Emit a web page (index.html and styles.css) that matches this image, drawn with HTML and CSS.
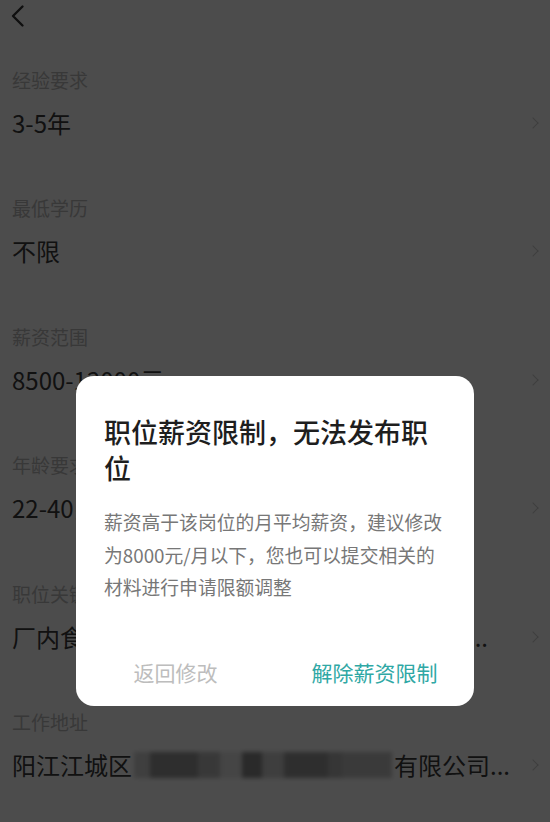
FILE: index.html
```html
<!DOCTYPE html>
<html lang="zh-CN">
<head>
<meta charset="utf-8">
<title>职位信息</title>
<link rel="stylesheet" href="styles.css">
</head>
<body>
<div class="page">
  <header class="topbar">
    <svg class="back" width="16" height="24" viewBox="0 0 16 24"><path d="M12.5 2.5 L3 12 L12.5 21.5" fill="none" stroke="#333" stroke-width="2.4" stroke-linecap="round" stroke-linejoin="round"/></svg>
  </header>
  <div class="row">
    <div class="label">经验要求</div>
    <div class="value-line"><span class="value">3-5年</span><span class="chev"></span></div>
  </div>
  <div class="row">
    <div class="label">最低学历</div>
    <div class="value-line"><span class="value">不限</span><span class="chev"></span></div>
  </div>
  <div class="row">
    <div class="label">薪资范围</div>
    <div class="value-line"><span class="value">8500-12000元</span><span class="chev"></span></div>
  </div>
  <div class="row">
    <div class="label">年龄要求</div>
    <div class="value-line"><span class="value">22-40岁</span><span class="chev"></span></div>
  </div>
  <div class="row">
    <div class="label">职位关键词</div>
    <div class="value-line"><span class="value">厂内食宿，包吃包住，五险一金，节假日福...</span><span class="chev"></span></div>
  </div>
  <div class="row">
    <div class="label">工作地址</div>
    <div class="value-line"><span class="value">阳江江城区<span class="mosaic"><i class="m1"></i><i class="m2"></i><i class="m3"></i><i class="m4"></i><i class="m5"></i><i class="m6"></i><i class="m7"></i><i class="m8"></i><i class="m9"></i></span>有限公司...</span><span class="chev"></span></div>
  </div>
</div>
<div class="mask">
  <div class="dialog">
    <h2 class="dlg-title">职位薪资限制，无法发布职<br>位</h2>
    <p class="dlg-text">薪资高于该岗位的月平均薪资，建议修改<br>为8000元/月以下，您也可以提交相关的<br>材料进行申请限额调整</p>
    <div class="dlg-actions">
      <div class="btn btn-cancel">返回修改</div>
      <div class="btn btn-ok">解除薪资限制</div>
    </div>
  </div>
</div>
</body>
</html>
```

FILE: styles.css
```css
* { box-sizing: border-box; }
html, body {
  margin: 0;
  padding: 0;
  width: 550px;
  height: 822px;
  overflow: hidden;
  background: #ffffff;
  font-family: "Noto Sans CJK SC", "Noto Sans", sans-serif;
}
.page {
  width: 550px;
}
.topbar {
  height: 56px;
  padding: 4px 0 0 10px;
}
.back { display: block; }
.row {
  height: 128.4px;
  padding: 14px 12px 0 12px;
}
.label {
  font-size: 19px;
  line-height: 20px;
  color: #bcbcbc;
}
.value-line {
  margin-top: 18px;
  height: 30px;
  display: flex;
  align-items: center;
  justify-content: space-between;
}
.value {
  font-size: 24px;
  line-height: 30px;
  color: #3a3a3a;
  white-space: nowrap;
  display: flex;
  align-items: center;
}
.chev {
  width: 8px;
  height: 8px;
  border-top: 1.6px solid #cfcfcf;
  border-right: 1.6px solid #cfcfcf;
  transform: rotate(45deg);
  margin-right: 1px;
}
.mosaic {
  display: inline-flex;
  width: 258px;
  height: 26px;
  margin: 0 2px;
  filter: blur(2px);
}
.mosaic i { display: block; height: 100%; }
.m1 { width: 16px; background: #d2d2d2; }
.m2 { width: 48px; background: #9a9a9a; }
.m3 { width: 22px; background: #bdbdbd; }
.m4 { width: 22px; background: #e6e6e6; }
.m5 { width: 20px; background: #8c8c8c; }
.m6 { width: 22px; background: #cfcfcf; }
.m7 { width: 44px; background: #9c9c9c; }
.m8 { width: 14px; background: #b4b4b4; }
.m9 { width: 50px; background: #c4c4c4; }

.mask {
  position: fixed;
  left: 0; top: 0; right: 0; bottom: 0;
  background: rgba(0, 0, 0, 0.7);
  display: flex;
  justify-content: center;
  align-items: flex-start;
  padding-top: 376px;
}
.dialog {
  width: 398px;
  height: 330px;
  background: #ffffff;
  border-radius: 18px;
  padding: 38px 0 0 0;
  display: flex;
  flex-direction: column;
}
.dlg-title {
  margin: 0;
  padding: 0 20px 0 28px;
  font-size: 27px;
  line-height: 36px;
  font-weight: 500;
  color: #1e1e1e;
}
.dlg-text {
  margin: 20px 0 0 0;
  padding: 0 10px 0 28px;
  font-size: 18.8px;
  line-height: 32.5px;
  color: #777777;
  white-space: nowrap;
}
.dlg-actions {
  margin-top: auto;
  height: 66px;
  display: flex;
}
.btn {
  flex: 1;
  display: flex;
  align-items: center;
  justify-content: center;
  font-size: 21px;
  padding-bottom: 2px;
}
.btn-cancel { color: #bdbdbd; }
.btn-ok { color: #2fa8a5; }
```
